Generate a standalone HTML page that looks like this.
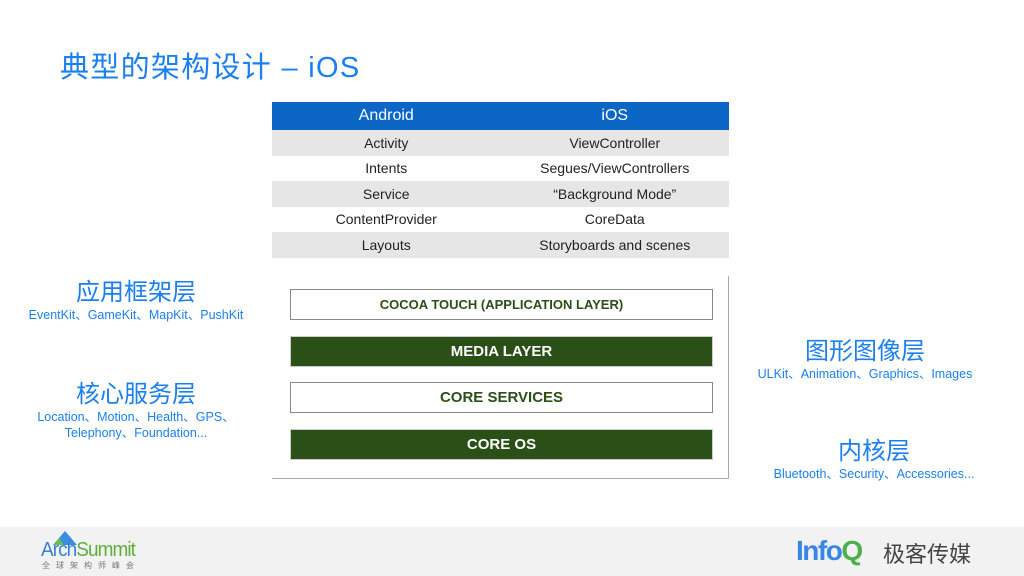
<!DOCTYPE html>
<html><head><meta charset="utf-8"><style>
body{margin:0;width:1024px;height:576px;position:relative;background:#fff;font-family:"Liberation Sans","Noto Sans CJK SC",sans-serif;overflow:hidden}
.a{position:absolute}
.title{left:60px;top:44px;font-size:29px;color:#1a7ff0;letter-spacing:1.3px}
table{position:absolute;left:272px;top:102px;width:457px;border-collapse:collapse;font-size:14px;color:#222}
td{height:25.5px;padding:0;text-align:center;width:50%}
tr.h td{background:#0b66c5;color:#fff;font-size:16px;height:28px}
tr.g td{background:#e6e6e6}
.box{position:absolute;left:290px;width:421px;height:29px;line-height:29px;text-align:center;font-weight:bold;font-size:15px;box-sizing:content-box}
.w{border:1px solid #888;background:#fff;color:#2a4f17}
.d{border:1px solid #ccc;background:#2a4f17;color:#fff}
.lab{text-align:center;color:#1a7ff0}
.big{font-size:24px}
.sm{font-size:12.5px;line-height:16px}
</style></head><body>
<div class="a title">典型的架构设计 – iOS</div>
<table>
<tr class="h"><td>Android</td><td>iOS</td></tr>
<tr class="g"><td>Activity</td><td>ViewController</td></tr>
<tr><td>Intents</td><td>Segues/ViewControllers</td></tr>
<tr class="g"><td>Service</td><td>“Background Mode”</td></tr>
<tr><td>ContentProvider</td><td>CoreData</td></tr>
<tr class="g"><td>Layouts</td><td>Storyboards and scenes</td></tr>
</table>
<div class="a" style="left:272px;top:276px;width:456px;height:202px;border-right:1px solid #aaa;border-bottom:1px solid #aaa"></div>
<div class="box w" style="top:289px;font-size:13px">COCOA TOUCH (APPLICATION LAYER)</div>
<div class="box d" style="top:336px">MEDIA LAYER</div>
<div class="box w" style="top:382px">CORE SERVICES</div>
<div class="box d" style="top:429px">CORE OS</div>
<div class="a lab" style="left:0;width:272px;top:272px"><div class="big">应用框架层</div><div class="sm">EventKit、GameKit、MapKit、PushKit</div></div>
<div class="a lab" style="left:0;width:272px;top:374px"><div class="big">核心服务层</div><div class="sm">Location、Motion、Health、GPS、<br>Telephony、Foundation...</div></div>
<div class="a lab" style="left:740px;width:250px;top:331px"><div class="big">图形图像层</div><div class="sm">ULKit、Animation、Graphics、Images</div></div>
<div class="a lab" style="left:749px;width:250px;top:431px"><div class="big">内核层</div><div class="sm">Bluetooth、Security、Accessories...</div></div>
<div class="a" style="left:0;top:527px;width:1024px;height:49px;background:#f2f2f2"></div>
<svg class="a" style="left:50px;top:530px" width="30" height="16"><polygon points="15,1 27,15 3,15" fill="#3a8fe0"/><polygon points="9,8 14,15 4,15" fill="#6cc04a"/></svg>
<div class="a" style="left:41px;top:539px;font-size:20px;color:#3a7fd8;letter-spacing:-1px;transform:scaleX(0.95);transform-origin:left">Arch<span style="color:#5cb03a">Summit</span></div>
<div class="a" style="left:42px;top:560px;font-size:8px;color:#777;letter-spacing:6px">全球架构师峰会</div>
<div class="a" style="left:796px;top:535px;font-size:28px;font-weight:bold;color:#3a86e8;letter-spacing:-1.5px">Info<span style="color:#4bb04a">Q</span></div>
<div class="a" style="left:883px;top:537px;font-size:22px;color:#444">极客传媒</div>
</body></html>
